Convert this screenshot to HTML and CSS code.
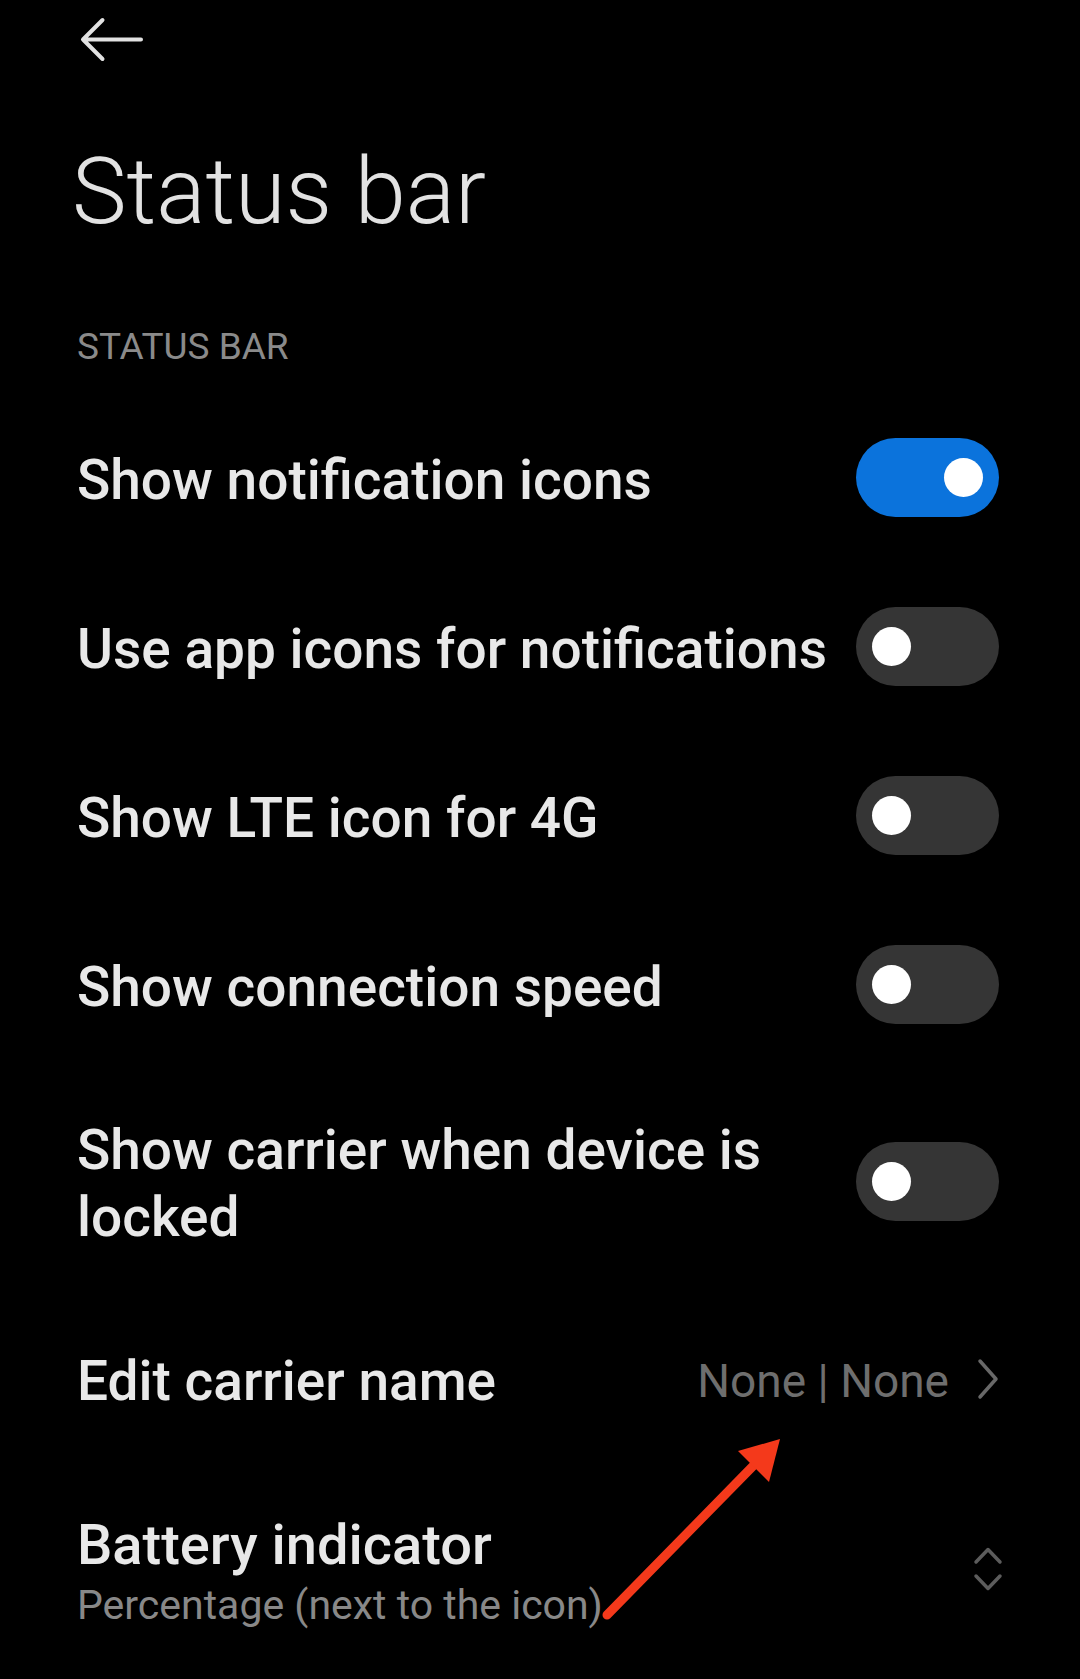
FILE: index.html
```html
<!DOCTYPE html>
<html lang="en">
<head>
<meta charset="utf-8">
<title>Status bar</title>
<link rel="stylesheet" href="styles.css">
</head>
<body>
<div class="screen">
  <header class="topbar">
    <svg class="back" width="64" height="48" viewBox="0 0 64 48" aria-label="Back">
      <path d="M3 23.5 H61 M3 23.5 L22.5 4 M3 23.5 L22.5 43" fill="none" stroke="#e2e2e2" stroke-width="4" stroke-linecap="round" stroke-linejoin="round"/>
    </svg>
  </header>

  <h1 class="title">Status bar</h1>
  <div class="section-label">STATUS BAR</div>

  <ul class="list">
    <li class="row">
      <span class="row-label">Show notification icons</span>
      <span class="switch on"><span class="knob"></span></span>
    </li>
    <li class="row">
      <span class="row-label">Use app icons for notifications</span>
      <span class="switch"><span class="knob"></span></span>
    </li>
    <li class="row">
      <span class="row-label">Show LTE icon for 4G</span>
      <span class="switch"><span class="knob"></span></span>
    </li>
    <li class="row">
      <span class="row-label">Show connection speed</span>
      <span class="switch"><span class="knob"></span></span>
    </li>
    <li class="row">
      <span class="row-label">Show carrier when device is locked</span>
      <span class="switch"><span class="knob"></span></span>
    </li>
    <li class="row">
      <span class="row-label">Edit carrier name</span>
      <span class="row-value">None | None</span>
      <svg class="chev-right" width="22" height="42" viewBox="0 0 22 42">
        <path d="M3 3 L19 21 L3 39" fill="none" stroke="#686868" stroke-width="3.5" stroke-linecap="round" stroke-linejoin="round"/>
      </svg>
    </li>
    <li class="row row-battery">
      <div class="row-text">
        <span class="row-title">Battery indicator</span>
        <span class="row-sub">Percentage (next to the icon)</span>
      </div>
      <svg class="chev-updown" width="32" height="46" viewBox="0 0 32 46">
        <path d="M4 16 L16 3.5 L28 16 M4 30 L16 42.5 L28 30" fill="none" stroke="#5c5c5c" stroke-width="3.5" stroke-linecap="round" stroke-linejoin="round"/>
      </svg>
    </li>
  </ul>

  <svg class="annotation" width="1080" height="1679" viewBox="0 0 1080 1679">
    <line x1="607" y1="1615" x2="756" y2="1463" stroke="#f4391b" stroke-width="9" stroke-linecap="round"/>
    <polygon points="780,1439 738,1451 769,1482" fill="#f4391b"/>
  </svg>
</div>
</body>
</html>
```
FILE: styles.css
```css
html, body {
  margin: 0;
  padding: 0;
  background: #000;
}

.screen {
  position: relative;
  width: 1080px;
  height: 1679px;
  overflow: hidden;
  background: #000;
  font-family: Roboto, "Noto Sans", sans-serif;
  color: #e8e8e8;
}

.topbar {
  height: 64px;
  box-sizing: border-box;
  padding: 16px 0 0 80px;
}

.back {
  display: block;
}

.title {
  margin: 73px 0 0;
  padding-left: 72px;
  font-size: 92px;
  line-height: 110px;
  font-weight: 300;
  color: #e2e2e2;
}

.section-label {
  margin-top: 78px;
  padding-left: 77px;
  font-size: 37px;
  line-height: 44px;
  font-weight: 400;
  color: #8a8a8a;
}

.list {
  list-style: none;
  margin: 24px 0 0;
  padding: 0;
}

.row {
  display: flex;
  align-items: center;
  gap: 18px;
  min-height: 169px;
  box-sizing: border-box;
  padding: 43px 81px 43px 77px;
}

.row-label {
  flex: 1;
  min-width: 0;
  padding-top: 5px;
  font-size: 55px;
  line-height: 67px;
  font-weight: 500;
  color: #e8e8e8;
}

.switch {
  position: relative;
  flex: none;
  width: 143px;
  height: 79px;
  border-radius: 40px;
  background: #353535;
}

.switch.on {
  background: #0b73dc;
}

.knob {
  position: absolute;
  top: 20px;
  left: 16px;
  width: 39px;
  height: 39px;
  border-radius: 50%;
  background: #fff;
}

.switch.on .knob {
  left: auto;
  right: 16px;
}

.row-value {
  padding-top: 4px;
  font-size: 46px;
  line-height: 56px;
  font-weight: 400;
  color: #6e6e6e;
}

.chev-right {
  flex: none;
  margin-left: 10px;
  display: block;
}

.row-battery {
  padding-top: 51px;
  padding-bottom: 40px;
}

.row-text {
  flex: 1;
  display: flex;
  flex-direction: column;
}

.row-title {
  font-size: 56px;
  line-height: 62px;
  font-weight: 500;
  color: #e8e8e8;
}

.row-sub {
  font-size: 41px;
  line-height: 58px;
  font-weight: 400;
  color: #888;
}

.chev-updown {
  flex: none;
  display: block;
  margin: 0 -5px 11px 0;
}

.annotation {
  position: absolute;
  left: 0;
  top: 0;
  pointer-events: none;
}
```
